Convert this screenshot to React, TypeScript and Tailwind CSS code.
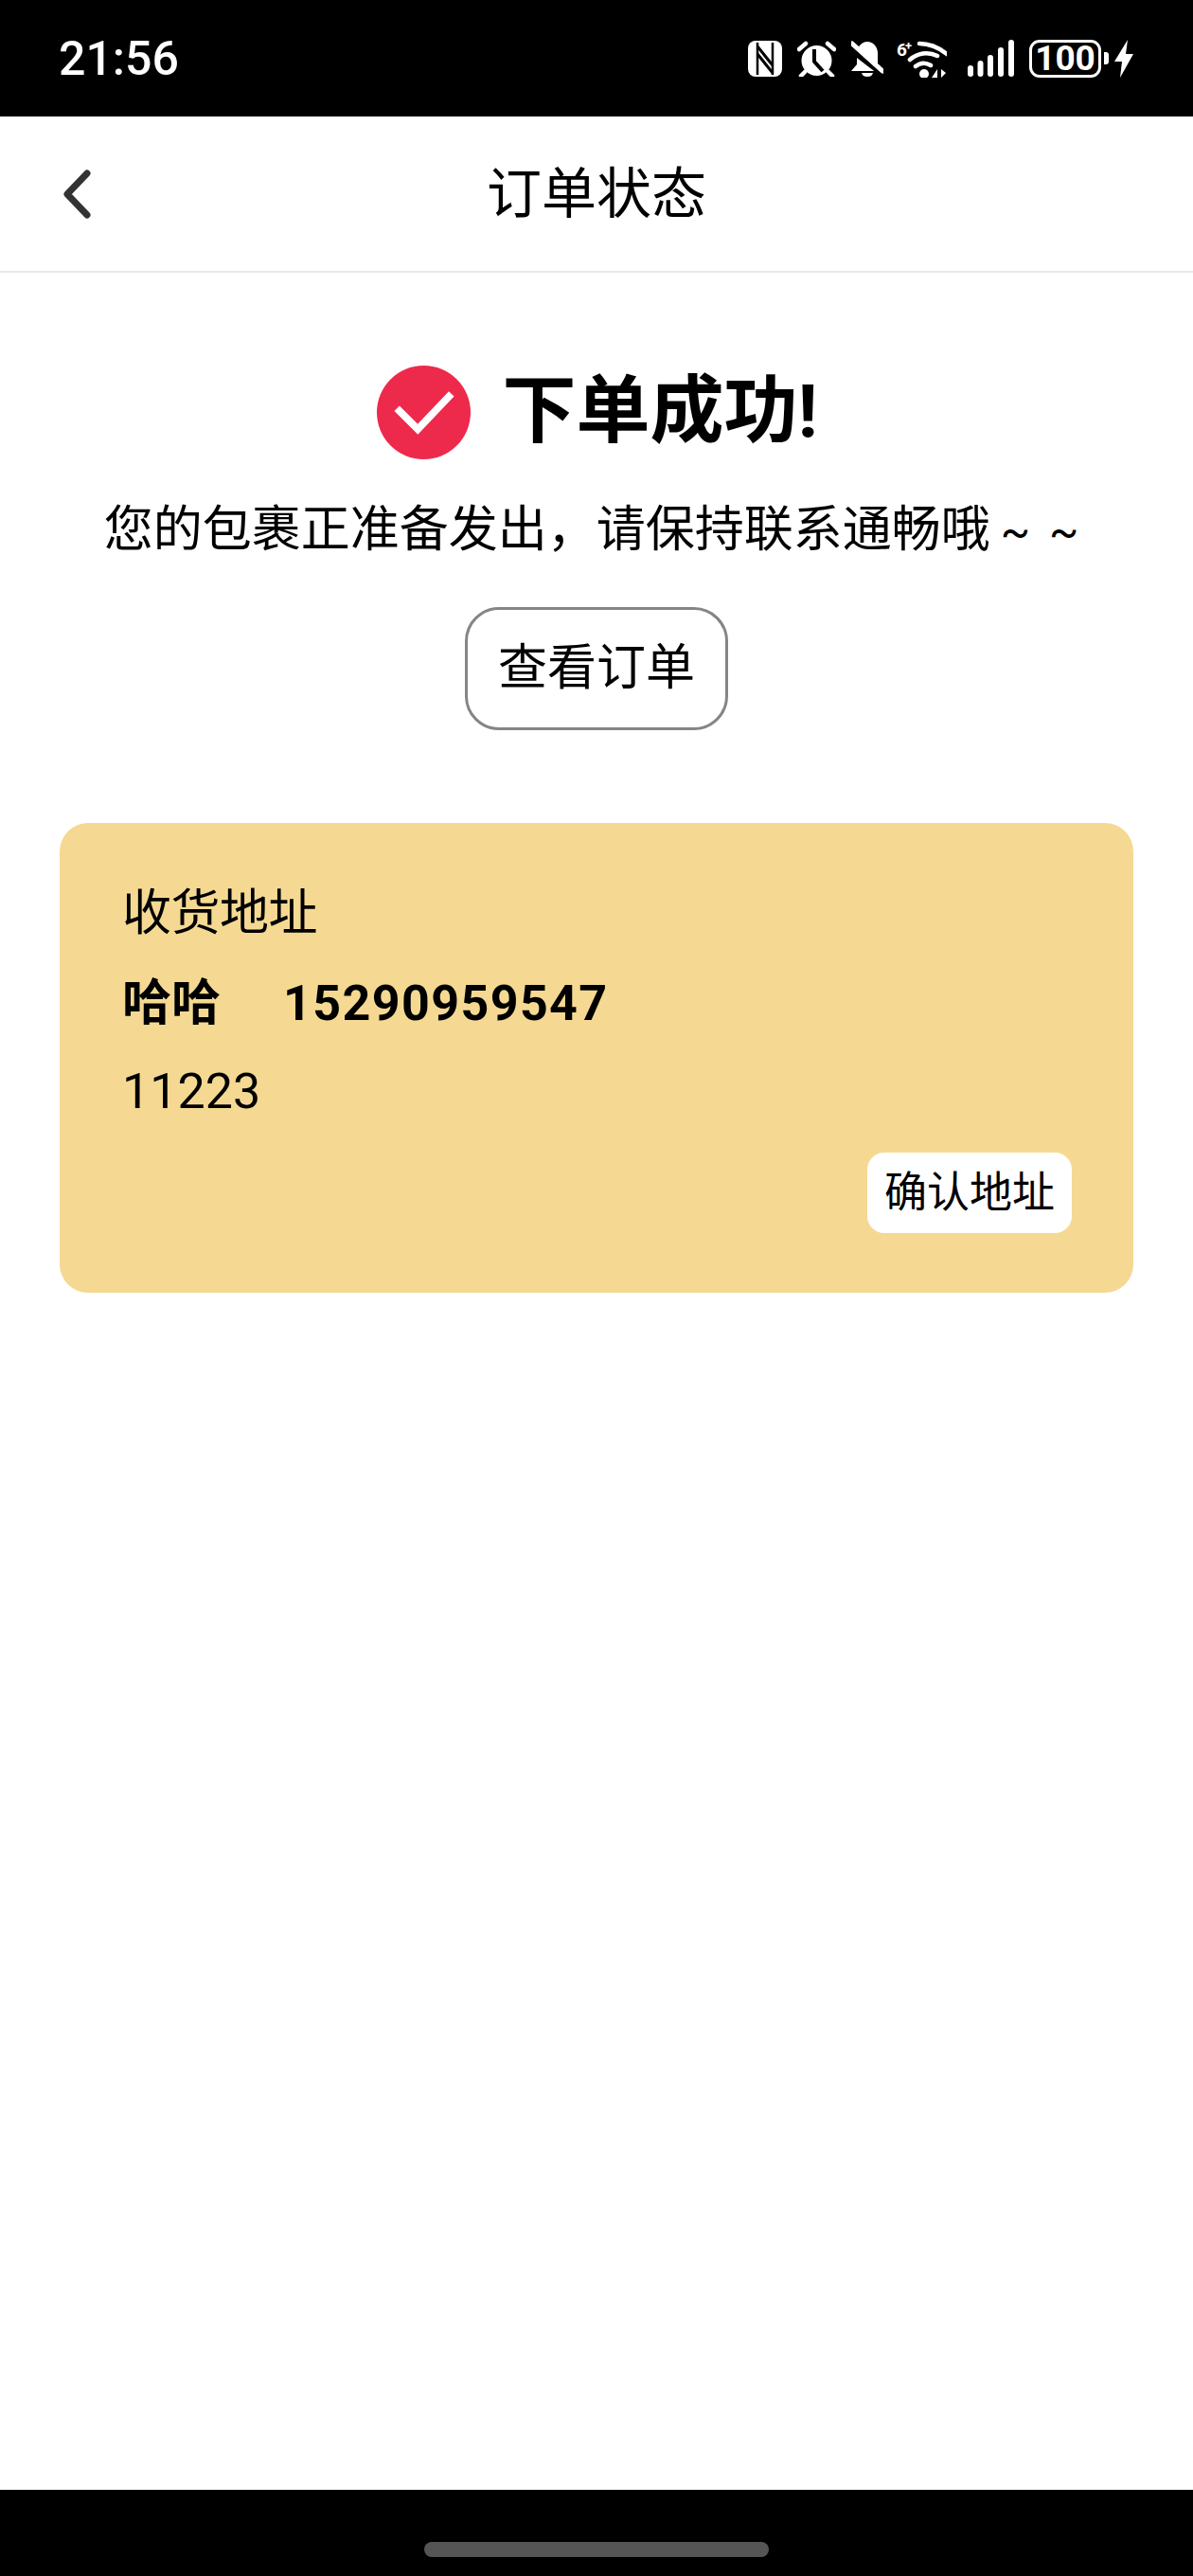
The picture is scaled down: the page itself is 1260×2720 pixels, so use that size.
import React from 'react'

const CJK = "font-['Roboto','Noto_Sans_CJK_SC',sans-serif]"

function StatusIcons() {
  return (
    <div className="flex items-center">
      {/* NFC */}
      <svg viewBox="0 0 36 38" className="w-[36px] h-[38px]">
        <rect x="0" y="0" width="36" height="38" rx="8" fill="#fff" />
        <path d="M10 2v34M26 2v34" stroke="#000" strokeWidth="2.5" />
        <path d="M10 6l16 20M10 14l16 20" stroke="#000" strokeWidth="3" />
      </svg>
      {/* alarm */}
      <svg viewBox="0 0 41 38" className="w-[41px] h-[38px] ml-[16px]" fill="none" stroke="#fff">
        <circle cx="20.5" cy="21" r="16" fill="#fff" stroke="none" />
        <path d="M18 9v13l9 10" stroke="#000" strokeWidth="4" />
        <path d="M2 9l7-6M39 9l-7-6M8 33l-4 4M33 33l4 4" strokeWidth="4.5" strokeLinecap="round" />
      </svg>
      {/* muted bell */}
      <svg viewBox="0 0 34 38" className="w-[34px] h-[38px] ml-[16px]">
        <path d="M17 1c6 0 11 5 11 12v12l6 7H0l6-7V13C6 7 11 1 17 1zM11 34h12c-1 3-3 4-6 4s-5-1-6-4z" fill="#fff" />
        <path d="M-2 7l38 29" stroke="#000" strokeWidth="8" />
        <path d="M1 3l32 29" stroke="#fff" strokeWidth="5" strokeLinecap="round" />
      </svg>
      {/* wifi 6+ */}
      <svg viewBox="0 0 53 40" className="w-[53px] h-[40px] ml-[14px]" fill="none" stroke="#fff" strokeLinecap="round">
        <text x="0" y="17" fill="#fff" stroke="none" fontSize="19" fontWeight="700" fontFamily="Roboto, sans-serif">6</text>
        <text x="9" y="11" fill="#fff" stroke="none" fontSize="13" fontWeight="700" fontFamily="Roboto, sans-serif">+</text>
        <path d="M24 4c10 0 19 3 29 11M14 21c8-7 19-9 29-4M20 28c5-4 11-4 16-1" strokeWidth="4.5" />
        <circle cx="29" cy="36" r="5" fill="#fff" stroke="none" />
        <path d="M43 31v9h-6zM47 31v9l5-5z" fill="#fff" stroke="none" />
      </svg>
      {/* signal */}
      <svg viewBox="0 0 49 40" className="w-[49px] h-[40px] ml-[22px]" fill="#fff">
        <rect x="0" y="27" width="6" height="12" rx="3" />
        <rect x="10.5" y="22" width="6" height="17" rx="3" />
        <rect x="21" y="16" width="6" height="23" rx="3" />
        <rect x="32" y="8" width="6" height="31" rx="3" />
        <rect x="43" y="0" width="6" height="39" rx="3" />
      </svg>
      {/* battery */}
      <div className="ml-[16px] w-[76px] h-[40px] border-[3px] border-white rounded-[11px] flex items-center justify-center font-['Roboto',sans-serif] font-bold text-[37px] leading-none text-white">
        100
      </div>
      <div className="ml-[3px] w-[5px] h-[13px] bg-white rounded-r-[3px]" />
      <svg viewBox="0 0 20 40" className="w-[20px] h-[40px] ml-[6px]" fill="#fff">
        <path d="M14 0L0 23h8L6 40l14-25h-8l2-15z" />
      </svg>
    </div>
  )
}

export default function App() {
  return (
    <div className={`w-[1260px] h-[2720px] bg-white flex flex-col text-black ${CJK}`}>
      <div className="h-[123px] bg-black shrink-0 flex items-center justify-between pl-[62px] pr-[63px]">
        <span className="font-['Roboto',sans-serif] font-medium text-[50px] leading-none text-white">21:56</span>
        <StatusIcons />
      </div>

      <div className="h-[165px] shrink-0 border-b-2 border-[#e8e8e8] grid grid-cols-[1fr_auto_1fr] items-center pl-[65px]">
        <svg viewBox="0 0 32 52" className="w-[32px] h-[52px]" fill="none" stroke="#333" strokeWidth="7" strokeLinecap="round" strokeLinejoin="round">
          <path d="M27 4L6 26l21 22" />
        </svg>
        <span className="text-[58px] leading-none -ml-[65px]">订单状态</span>
        <span />
      </div>

      <div className="flex-1 flex flex-col items-center">
        <div className="mt-[97px] pl-[2px] flex items-center">
          <div className="w-[99px] h-[99px] rounded-full bg-[#ee2a4c] flex items-center justify-center">
            <svg viewBox="0 0 66 50" className="w-[64px] h-[48px]" fill="none" stroke="#fff" strokeWidth="8">
              <path d="M3 21l23 23L63 5" />
            </svg>
          </div>
          <span className="ml-[33px] text-[78px] leading-[100px] font-bold">下单成功!</span>
        </div>
        <p className="mt-[40px] pr-[11px] text-[52px] leading-[70px] whitespace-nowrap">
          您的包裹正准备发出，请保持联系通畅哦<span className="text-[46px] ml-[11px]">~</span><span className="text-[46px] ml-[20px]">~</span>
        </p>
        <button className="mt-[45px] w-[278px] h-[130px] rounded-[36px] border-[3px] border-[#858585] bg-white text-[52px] leading-none">
          查看订单
        </button>

        <div className="mt-[98px] w-[1134px] h-[496px] rounded-[30px] bg-[#f5d992] pt-[65px] pl-[66px] pr-[65px] flex flex-col">
          <p className="text-[52px] leading-[62px] -tracking-[0.5px]">收货地址</p>
          <p className="mt-[33px] text-[52px] leading-[62px] font-bold flex">
            <span>哈哈</span>
            <span className="ml-[66px] tracking-[1.4px]">15290959547</span>
          </p>
          <p className="mt-[31px] text-[52px] leading-[62px]">11223</p>
          <div className="mt-[33px] flex justify-end">
            <button className="w-[216px] h-[85px] rounded-[18px] bg-white text-[45px] leading-none">确认地址</button>
          </div>
        </div>
      </div>

      <div className="h-[91px] shrink-0 bg-black flex justify-center pt-[55px]">
        <div className="w-[364px] h-[16px] rounded-full bg-[#555555]" />
      </div>
    </div>
  )
}
